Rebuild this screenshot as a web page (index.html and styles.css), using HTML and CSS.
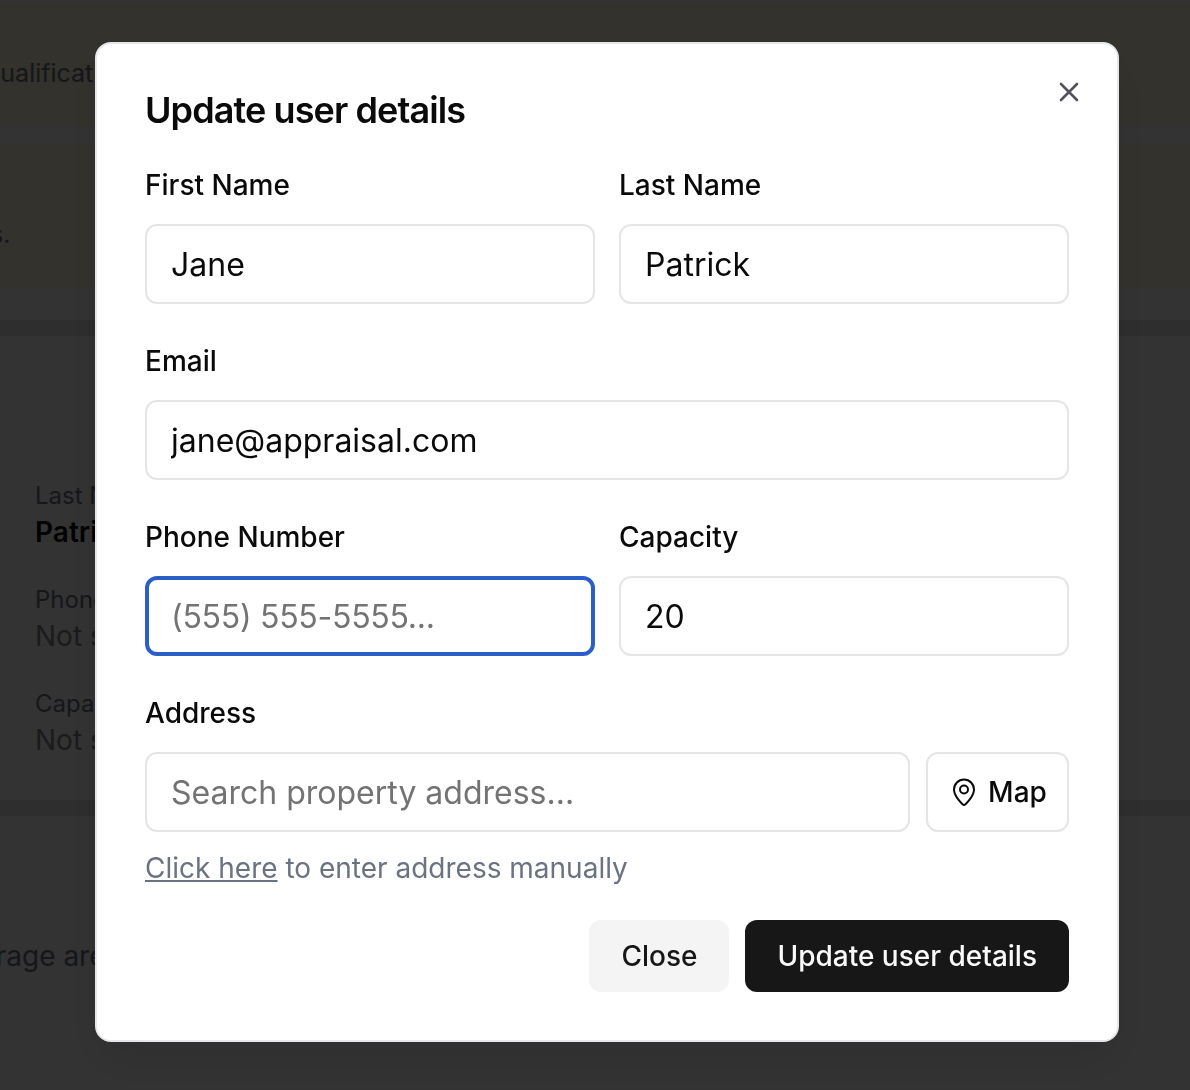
FILE: index.html
```html
<!DOCTYPE html>
<html lang="en">
<head>
    <meta charset="UTF-8">
    <meta name="viewport" content="width=device-width, initial-scale=1.0">
    <title>Update user details</title>
    <link rel="stylesheet" href="styles.css">
</head>
<body>

<div class="page">
    <div class="notice notice-first">
        <p class="notice-text">qualifications</p>
    </div>
    <div class="notice notice-second">
        <p class="notice-text notice-text-end">s.</p>
    </div>
    <div class="panel panel-details">
        <div class="detail">
            <span class="detail-label">Last Name</span>
            <span class="detail-strong">Patrick</span>
        </div>
        <div class="detail">
            <span class="detail-label">Phone</span>
            <span class="detail-muted">Not set</span>
        </div>
        <div class="detail">
            <span class="detail-label">Capacity</span>
            <span class="detail-muted">Not set</span>
        </div>
    </div>
    <div class="panel panel-coverage">
        <p class="notice-text">coverage area</p>
    </div>
</div>

<div class="overlay"></div>

<div class="modal">
    <button class="modal-close" aria-label="Close">
        <svg width="32" height="32" viewBox="0 0 32 32" fill="none" stroke="currentColor" stroke-width="2.6" stroke-linecap="round"><path d="M8 8l16 16M24 8L8 24"/></svg>
    </button>
    <h2 class="modal-title">Update user details</h2>

    <div class="form-row">
        <div class="field">
            <label class="field-label">First Name</label>
            <input class="field-input" type="text" value="Jane">
        </div>
        <div class="field">
            <label class="field-label">Last Name</label>
            <input class="field-input" type="text" value="Patrick">
        </div>
    </div>

    <div class="form-row">
        <div class="field">
            <label class="field-label">Email</label>
            <input class="field-input" type="text" value="jane@appraisal.com">
        </div>
    </div>

    <div class="form-row">
        <div class="field">
            <label class="field-label">Phone Number</label>
            <input class="field-input field-input-focus" type="text" placeholder="(555) 555-5555...">
        </div>
        <div class="field">
            <label class="field-label">Capacity</label>
            <input class="field-input" type="text" value="20">
        </div>
    </div>

    <div class="form-row form-row-last">
        <div class="field">
            <label class="field-label">Address</label>
            <div class="address-row">
                <input class="field-input" type="text" placeholder="Search property address...">
                <button class="map-button">
                    <svg width="32" height="32" viewBox="0 0 32 32" fill="none" stroke="currentColor" stroke-width="2" stroke-linejoin="round"><path d="M16 29c-1 0-10-8.500-10-15.500a10 10 0 0 1 20 0C26 20.500 17 29 16 29z"/><circle cx="16" cy="13.500" r="4"/></svg>
                    Map
                </button>
            </div>
            <p class="field-hint"><a href="#">Click here</a> to enter address manually</p>
        </div>
    </div>

    <div class="modal-actions">
        <button class="btn btn-light">Close</button>
        <button class="btn btn-dark">Update user details</button>
    </div>
</div>

</body>
</html>
```

FILE: styles.css
```css
* {
    box-sizing: border-box;
}

html, body {
    margin: 0;
    height: 100%;
}

body {
    background-color: #fff;
    font-family: 'Inter', 'Liberation Sans', sans-serif;
    color: #0a0a0a;
    overflow: hidden;
}

/* page behind the dialog */
.page {
    height: 1090px;
    padding-top: 3px;
    background-color: #fff;
    overflow: hidden;
}

.notice {
    background-color: #fffadc;
    margin-bottom: 16px;
}

.notice-first {
    height: 124px;
    padding-top: 52px;
}

.notice-second {
    height: 145px;
    padding-top: 73px;
}

.notice-text {
    margin: 0 0 0 -15px;
    font-size: 25px;
    line-height: 36px;
    color: #6b7280;
    white-space: nowrap;
}

.notice-text-end {
    margin-left: -10px;
}

.panel {
    background-color: #fff;
    border-top: 16px solid #e5e5e5;
}

.panel-details {
    height: 480px;
    margin-top: 32px;
    padding: 144px 0 0 35px;
}

.panel-coverage {
    height: 300px;
    padding-top: 122px;
}

.panel-coverage .notice-text {
    margin-left: -68px;
    font-size: 28px;
}

.detail {
    display: flex;
    flex-direction: column;
    margin-bottom: 32px;
}

.detail-label {
    font-size: 24px;
    line-height: 32px;
    color: #6b7280;
}

.detail-strong {
    font-size: 28px;
    line-height: 40px;
    font-weight: 600;
}

.detail-muted {
    font-size: 28px;
    line-height: 40px;
    color: #878790;
}

.overlay {
    position: fixed;
    inset: 0;
    background-color: rgba(0, 0, 0, 0.8);
}

/* dialog */
.modal {
    position: fixed;
    left: 95px;
    top: 42px;
    width: 1024px;
    height: 1000px;
    padding: 48px;
    background-color: #fff;
    border: 2px solid #e5e7eb;
    border-radius: 16px;
    box-shadow: 0 20px 50px rgba(0, 0, 0, 0.1);
}

.modal-close {
    position: absolute;
    top: 32px;
    right: 32px;
    width: 32px;
    height: 32px;
    padding: 0;
    border: none;
    background: none;
    color: #52525b;
    line-height: 0;
}

.modal-title {
    margin: 0 0 41px;
    font-size: 36px;
    line-height: 36px;
    font-weight: 600;
    letter-spacing: -0.9px;
}

.form-row {
    display: flex;
    gap: 24px;
    margin-bottom: 41px;
}

.form-row-last {
    margin-bottom: 36px;
}

.field {
    flex: 1;
    min-width: 0;
}

.field-label {
    display: block;
    height: 32px;
    margin-bottom: 23px;
    font-size: 28px;
    line-height: 32px;
    font-weight: 500;
}

.field-input {
    display: block;
    width: 100%;
    height: 80px;
    padding: 0 24px;
    background-color: #fff;
    border: 2px solid #e5e5e5;
    border-radius: 12px;
    font-family: inherit;
    font-size: 32px;
    color: #0a0a0a;
    outline: none;
}

.field-input::placeholder {
    color: #737373;
    opacity: 1;
}

.field-input-focus {
    border: 4px solid #2b5fc7;
    padding: 0 22px;
    letter-spacing: -0.28px;
}

.address-row {
    display: flex;
    gap: 16px;
}

.address-row .field-input {
    flex: 1;
    min-width: 0;
}

.map-button {
    display: flex;
    align-items: center;
    justify-content: center;
    gap: 8px;
    width: 143px;
    height: 80px;
    flex-shrink: 0;
    padding: 0;
    background-color: #fff;
    border: 2px solid #e5e5e5;
    border-radius: 12px;
    font-family: inherit;
    font-size: 28px;
    font-weight: 500;
    color: #0a0a0a;
}

.field-hint {
    margin: 20px 0 0;
    font-size: 28px;
    line-height: 32px;
    color: #6b7280;
}

.field-hint a {
    color: inherit;
    text-decoration: underline;
}

.modal-actions {
    display: flex;
    justify-content: flex-end;
    gap: 16px;
}

.btn {
    height: 72px;
    padding: 0 32px;
    border: none;
    border-radius: 12px;
    font-family: inherit;
    font-size: 28px;
    font-weight: 500;
}

.btn-light {
    background-color: #f4f4f5;
    color: #171717;
}

.btn-dark {
    background-color: #171717;
    color: #fafafa;
}
```
